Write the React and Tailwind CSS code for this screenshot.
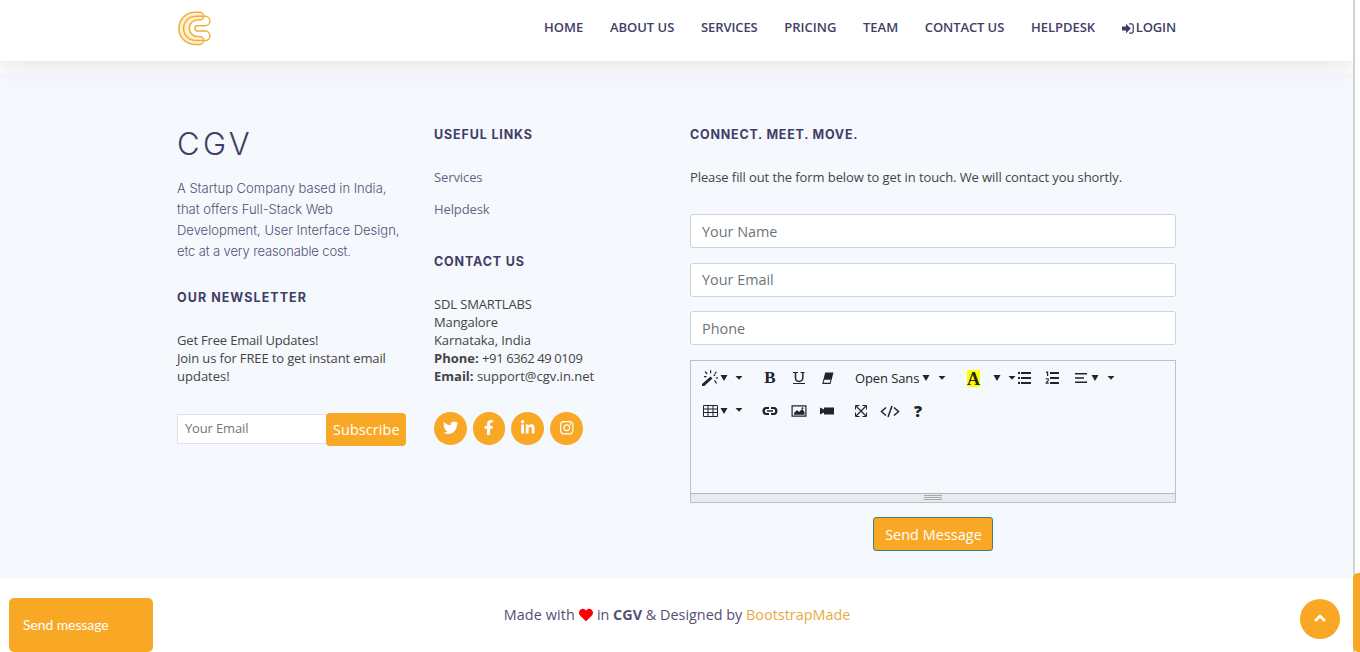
import React from "react";
import { FaTwitter, FaFacebookF, FaLinkedinIn, FaInstagram, FaHeart } from "react-icons/fa";

const openSans = "font-['Open_Sans',sans-serif]";
const heading = "font-['Inter',sans-serif] text-[12.5px] leading-4 font-bold text-[#413e66] whitespace-nowrap";

function Logo() {
  return (
    <svg className="block h-[36px] w-[36px]" viewBox="0 0 36 36" fill="none" stroke="#f2ae3d" strokeWidth="1.5">
      <path
        fill="#fdf0cf"
        d="M18 2.300h4.700a3.900 3.900 0 0 1 0 7.800H20.500a8.200 8.200 0 0 0 0 16.400h2.200a4 4 0 0 1 0 8H18a16.100 16.100 0 0 1 0-32.200z"
      />
      <path d="M18.700 6.300h9.500a4.700 4.700 0 0 1 0 9.400h-7.500a2.700 2.700 0 0 0 0 5.400h7.500a4.700 4.700 0 0 1 0 9.400h-9.500a12.100 12.100 0 0 1 0-24.200z" />
    </svg>
  );
}

function LoginIcon() {
  return (
    <svg className="h-[11px] w-[12px] shrink-0" viewBox="0 0 12 11" fill="#413e66">
      <path d="M0 3.500h4V.8l4.800 4.700L4 10.200V7.500H0z" />
      <path d="M7 .8h2.300c1.200 0 1.900.7 1.900 1.900v5.600c0 1.200-.7 1.900-1.900 1.900H7" fill="none" stroke="#413e66" strokeWidth="1.200" />
    </svg>
  );
}

function Arrow({ className }) {
  return (
    <svg className={"h-[6px] w-[8px] shrink-0 " + className} viewBox="0 0 8 6" fill="#212529">
      <path d="M.5 0h7L4 6z" />
    </svg>
  );
}

function Caret({ className }) {
  return (
    <svg className={"h-[4px] w-[8px] shrink-0 " + className} viewBox="0 0 8 4" fill="#212529">
      <path d="M.5 0h7L4 3.800z" />
    </svg>
  );
}

function Icon({ className, children }) {
  return (
    <svg className={"h-[16px] w-[16px] shrink-0 " + className} viewBox="0 0 16 16" fill="#212529" stroke="none">
      {children}
    </svg>
  );
}

function Toolbar() {
  return (
    <div className="text-[#212529]">
      <div className="flex h-[34px] items-center pl-[10px]">
        <Icon className="ml-px">
          <path d="M0 14L8.500 6.500l2 2L2.300 16H0z" />
          <path d="M11.300 5.200l1.300-1.200 1 1-1.300 1.300z" />
          <path d="M8 .2h1.200v3H8zM2.500 2l1.200-.8 2 2.200-1 .8zM14 1.500l.9.8-1.800 1.800-.8-.8zM14 7.300h2v1.200h-2zM12 10.500l1-.5 2 3.200-1 .6zM2 6h2.500v1.200H2z" />
        </Icon>
        <Arrow className="ml-[2px]" />
        <Caret className="mb-px ml-[7px]" />
        <b className="ml-[20px] w-[14px] text-center font-['Liberation_Serif',serif] text-[17px] leading-4">B</b>
        <svg className="ml-[15px] h-[16px] w-[14px] shrink-0" viewBox="0 0 14 16" fill="none" stroke="#212529">
          <path d="M1 2.500h5M8.500 2.500h4M1 13.500h12" strokeWidth="1.200" />
          <path d="M3.500 2.500v5.500c0 4.500 7.300 4.500 7.300 0V2.500" strokeWidth="1.500" />
        </svg>
        <Icon className="ml-[14px]">
          <path fillRule="evenodd" d="M5.200 2.500h8.300L10.500 14H2.200zM3.500 12.800h6.200l.9-3H4.400z" />
        </Icon>
        <span className="ml-[19px] w-[65px] text-[13px] leading-4 tracking-[-0.1px] whitespace-nowrap">Open Sans</span>
        <Arrow className="ml-[2px]" />
        <Caret className="mb-px ml-[8px]" />
        <b className="ml-[21px] h-[17px] w-[13px] bg-[#ffff00] text-center font-['Liberation_Serif',serif] text-[18px] leading-[18px]">A</b>
        <Arrow className="ml-[13px]" />
        <Caret className="mb-px ml-[7px]" />
        <Icon className="ml-px">
          <path d="M1 2h2v2H1zM1 7h2v2H1zM1 12h2v2H1zM4 2h10v2H4zM4 7h10v2H4zM4 12h10v2H4z" />
        </Icon>
        <Icon className="ml-[12px]">
          <path d="M5 2h9v2H5zM5 7h9v2H5zM5 12h9v2H5zM2 1.500h1.200V6H2V3H1V2zM.7 8.200h3V11L2 12.500h1.700v1.300H.7v-1.500l2-1.800V9.300h-2z" />
        </Icon>
        <Icon className="ml-[13px]">
          <path d="M1 3h12v1.500H1zM1 7.200h9v1.500H1zM1 11.500h12V13H1z" />
        </Icon>
        <Arrow className="ml-[1px]" />
        <Caret className="mb-px ml-[8px]" />
      </div>
      <div className="flex h-[32px] items-center pl-[10px]">
        <svg className="ml-px h-[12px] w-[16px] shrink-0" viewBox="0 0 16 12" fill="none" stroke="#212529">
          <path d="M1.500.5h14v11h-14zM1.500 4h14M1.500 7.500h14M6 .5v11M11 .5v11" />
        </svg>
        <Arrow className="ml-[2px]" />
        <Caret className="mb-[3px] ml-[7px]" />
        <Icon className="ml-[19px]">
          <path d="M7 4H4C-.7 4-.7 12 4 12h3v-2H4.500C2.300 10 2.300 6 4.500 6H7zM9 4h3c4.700 0 4.700 8 0 8H9v-2h2.500c2.200 0 2.200-4 0-4H9zM5 7.200h6v1.600H5z" />
        </Icon>
        <Icon className="ml-[13px]">
          <path fillRule="evenodd" d="M.5 2.200h15v11.600H.5zM1.700 3.400v9.200h12.600V3.400z" />
          <path d="M3 11.800v-1.800l3-3 2 2 3-3 2.500 3v2.800z" />
          <circle cx="11.500" cy="5.200" r="1" />
        </Icon>
        <Icon className="ml-[12px]">
          <path d="M1 4.500l4 2v-2h10v7H5v-2l-4 2z" />
        </Icon>
        <svg className="ml-[18px] h-[16px] w-[16px] shrink-0" viewBox="0 0 16 16" fill="none" stroke="#212529">
          <path d="M2.500 6.500v-4h4M9.500 2.500h4v4M13.500 9.500v4h-4M6.500 13.500h-4v-4" />
          <path d="M3 3l10 10M13 3L3 13" strokeWidth="1.200" />
        </svg>
        <svg className="ml-[11px] h-[16px] w-[20px] shrink-0" viewBox="0 0 20 16" fill="none" stroke="#212529" strokeWidth="1.500">
          <path d="M6 4.500L1.500 8.500 6 12.500M14 4.500l4.500 4-4.500 4M12 3L8 14" />
        </svg>
        <b className="ml-[13px] w-[10px] text-center text-[16px] leading-4 font-extrabold">?</b>
      </div>
    </div>
  );
}

function Social({ children }) {
  return (
    <a className="flex size-[32.5px] items-center justify-center rounded-full bg-[#f9a826] pb-[2px] text-[15.5px] text-white">
      {children}
    </a>
  );
}

const inputClass =
  "block h-[34px] w-full rounded-[3px] border border-[#ced4da] bg-white px-[11px] text-[14.4px] placeholder:text-[#6c757d] outline-none";

export default function App() {
  return (
    <div className={"relative flex h-[652px] w-[1360px] overflow-hidden bg-white text-[#444444] " + openSans}>
      <div className="flex w-[1353px] flex-col">
        <header className="relative z-10 h-[61px] shrink-0 bg-white pl-[177px] shadow-[0_0_27px_rgba(65,62,102,0.17)]">
          <div className="flex w-[999px] justify-between">
            <div className="pt-[10px]">
              <Logo />
            </div>
            <nav className="flex h-[56px] w-[632px] items-center justify-between text-[13px] font-semibold tracking-[-0.02px] whitespace-nowrap text-[#413e66]">
              <a>HOME</a>
              <a>ABOUT US</a>
              <a className="tracking-[-0.1px]">SERVICES</a>
              <a>PRICING</a>
              <a>TEAM</a>
              <a className="tracking-[-0.1px]">CONTACT US</a>
              <a>HELPDESK</a>
              <a className="flex items-center gap-[2px] tracking-[-0.15px]">
                <LoginIcon />
                LOGIN
              </a>
            </nav>
          </div>
        </header>
        <div className="h-[12px] shrink-0 bg-[#fdfdfb]" />
        <footer className="flex h-[505px] shrink-0 bg-[#f5f8fd] pl-[177px]">
          <section className="w-[257px] pt-[52px]">
            <h3 className="font-['Inter',sans-serif] text-[31px] leading-[38px] font-light tracking-[3.4px] text-[#413e66]">CGV</h3>
            <div className="mt-[15px] font-['Inter',sans-serif] text-[13px] leading-[21px] font-light whitespace-nowrap text-[#535074]">
              <p>A Startup Company based in India,</p>
              <p>that offers Full-Stack Web</p>
              <p>Development, User Interface Design,</p>
              <p className="tracking-[-0.13px]">etc at a very reasonable cost.</p>
            </div>
            <h4 className={heading + " mt-[28px] tracking-[1.05px]"}>OUR NEWSLETTER</h4>
            <div className="mt-[25px] text-[13px] leading-[18px] whitespace-nowrap">
              <p className="tracking-[-0.18px]">Get Free Email Updates!</p>
              <p className="tracking-[-0.13px]">Join us for FREE to get instant email</p>
              <p>updates!</p>
            </div>
            <form className="mt-[27px] flex w-[229px] items-center">
              <input
                placeholder="Your Email"
                className="h-[30px] w-[149px] border border-r-0 border-[#dce1ec] bg-white px-[7px] pb-[2px] text-[13px] tracking-[-0.15px] outline-none placeholder:text-[#757575]"
              />
              <button
                type="button"
                className="mt-px -mb-px h-[33px] w-[80px] rounded-[4px] bg-[#f9a826] pl-[7px] text-left text-[14.4px] tracking-[0.1px] text-white"
              >
                Subscribe
              </button>
            </form>
          </section>
          <section className="w-[256px] pt-[54px]">
            <h4 className={heading + " tracking-[0.85px]"}>USEFUL LINKS</h4>
            <div className="mt-[18px] text-[13px] leading-[32px] tracking-[-0.1px] text-[#68667f]">
              <p>Services</p>
              <p>Helpdesk</p>
            </div>
            <h4 className={heading + " mt-[29px] tracking-[0.85px]"}>CONTACT US</h4>
            <div className="mt-[25px] text-[13px] leading-[18px] whitespace-nowrap">
              <p className="tracking-[-0.13px]">SDL SMARTLABS</p>
              <p className="tracking-[-0.1px]">Mangalore</p>
              <p className="tracking-[-0.1px]">Karnataka, India</p>
              <p>
                <b>Phone:</b> <span className="tracking-[-0.4px]">+91 6362 49 0109</span>
              </p>
              <p>
                <b>Email:</b> support@cgv.in.net
              </p>
            </div>
            <div className="mt-[27.4px] flex gap-[6.200px]">
              <Social><FaTwitter /></Social>
              <Social><FaFacebookF /></Social>
              <Social><FaLinkedinIn /></Social>
              <Social><FaInstagram /></Social>
            </div>
          </section>
          <section className="w-[486px] pt-[54px]">
            <h4 className={heading + " tracking-[0.77px]"}>CONNECT. MEET. MOVE.</h4>
            <p className="mt-[25px] text-[13px] leading-[18px] tracking-[-0.093px] whitespace-nowrap">
              Please fill out the form below to get in touch. We will contact you shortly.
            </p>
            <form className="mt-[28px]">
              <input className={inputClass} placeholder="Your Name" />
              <input className={inputClass + " mt-[15px] pb-[2px]"} placeholder="Your Email" />
              <input className={inputClass + " mt-[14px]"} placeholder="Phone" />
              <div className="mt-[15px] flex h-[143px] flex-col justify-between border border-[#bcc1c8]">
                <Toolbar />
                <div className="flex h-[9px] flex-col items-center gap-px border-t border-[#b2b7bf] bg-[#e7eaee] pt-px">
                  <i className="h-px w-[18px] bg-[#a9a9a9]" />
                  <i className="h-px w-[18px] bg-[#a9a9a9]" />
                  <i className="h-px w-[18px] bg-[#a9a9a9]" />
                </div>
              </div>
              <button
                type="button"
                className="mx-auto mt-[14px] block h-[34px] w-[120px] rounded-[3px] border border-[#3d7f89] bg-[#f9a826] pt-px pl-px text-[14.4px] tracking-[0.06px] whitespace-nowrap text-white"
              >
                Send Message
              </button>
            </form>
          </section>
        </footer>
        <div className="flex h-[74px] items-center justify-center gap-[4px] pl-px text-[14.4px] whitespace-nowrap text-[#535074]">
          <span className="tracking-[0.1px]">Made with</span>
          <FaHeart className="text-[14px] text-[#ff0000]" />
          <span>
            in <b>CGV</b> &amp; Designed by <a className="text-[#e5ac3f]">BootstrapMade</a>
          </span>
        </div>
      </div>
      <aside className="relative z-20 flex w-[7px] flex-col justify-end border-l-2 border-[#d2d2d6] bg-white">
        <div className="-ml-[2px] h-[79px] w-[9px] rounded-l-[5px] bg-[#f9a826]" />
      </aside>
      <div className="absolute top-[598px] left-[9px] z-20 flex h-[54px] w-[144px] items-center rounded-[5px] bg-[#f9a826] pb-[2px] pl-[14px] font-['Lato',sans-serif] text-[14px] tracking-[-0.1px] text-white">
        Send message
      </div>
      <button
        type="button"
        aria-label="Back to top"
        className="absolute top-[599px] left-[1300px] z-20 flex size-[40px] items-center justify-center rounded-full bg-[#f9a826]"
      >
        <svg className="mb-[2px] h-[8px] w-[12px]" viewBox="0 0 12 8" fill="none" stroke="#fff" strokeWidth="2.600">
          <path d="M1 7l5-5 5 5" />
        </svg>
      </button>
    </div>
  );
}
